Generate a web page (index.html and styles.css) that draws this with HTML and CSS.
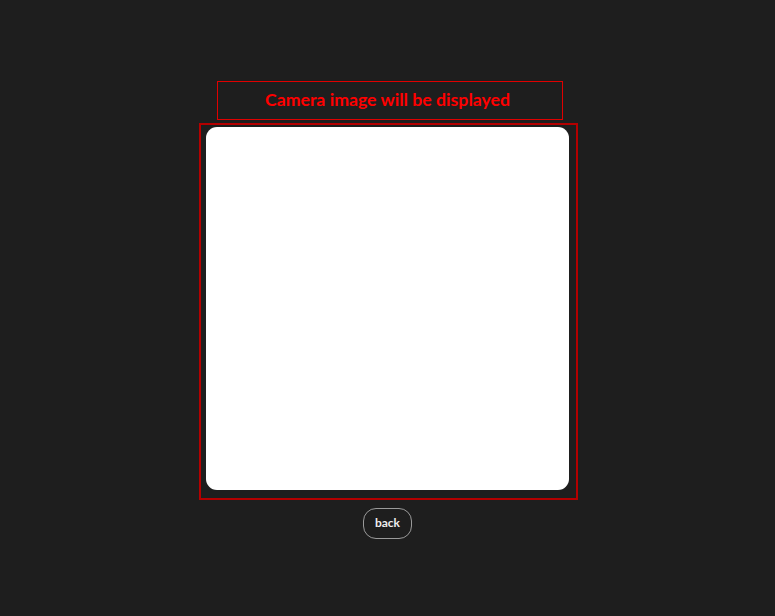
FILE: index.html
```html
<!DOCTYPE html>
<html lang="en">

<head>
    <meta charset="UTF-8">
    <meta name="viewport" content="width=device-width, initial-scale=1.0">
    <title>Camera</title>
    <link rel="stylesheet" href="styles.css">
</head>

<body>
    <div id="cameraWrap">
        <!-- label -->
        <p class="label">Camera image will be displayed</p>
        <!-- camera view -->
        <div class="frame">
            <div class="view"></div>
        </div>
        <!-- back button -->
        <a href="#" class="backBtn">back</a>
    </div>
</body>

</html>
```

FILE: styles.css
```css
/* reset */
* {
    margin: 0;
    box-sizing: border-box;
}

html,
body {
    height: 100%;
}

body {
    background: #1e1e1e;
    font-family: Lato, "Open Sans", sans-serif;
}

/* wrap */
#cameraWrap {
    display: flex;
    flex-direction: column;
    align-items: center;
    padding-top: 81px;
}

/* label */
.label {
    width: 346px;
    height: 39px;
    margin-left: 5px;
    padding-right: 5px;
    border: 1px solid #e00000;
    color: #ff0000;
    font-size: 17.7px;
    font-weight: 700;
    line-height: 35px;
    text-align: center;
}

/* camera view */
.frame {
    width: 379px;
    height: 377px;
    margin-top: 3px;
    margin-left: 2px;
    padding: 2px 7px 8px 5px;
    border: 2px solid #b40000;
}

.view {
    width: 100%;
    height: 100%;
    background: #fff;
    border-radius: 11px;
}

/* back button */
.backBtn {
    display: block;
    width: 49px;
    height: 31px;
    margin-top: 8px;
    border: 1px solid #9a9a9a;
    border-radius: 13px;
    color: #eee;
    font-size: 12px;
    font-weight: 700;
    line-height: 28px;
    text-align: center;
    text-decoration: none;
}
```
